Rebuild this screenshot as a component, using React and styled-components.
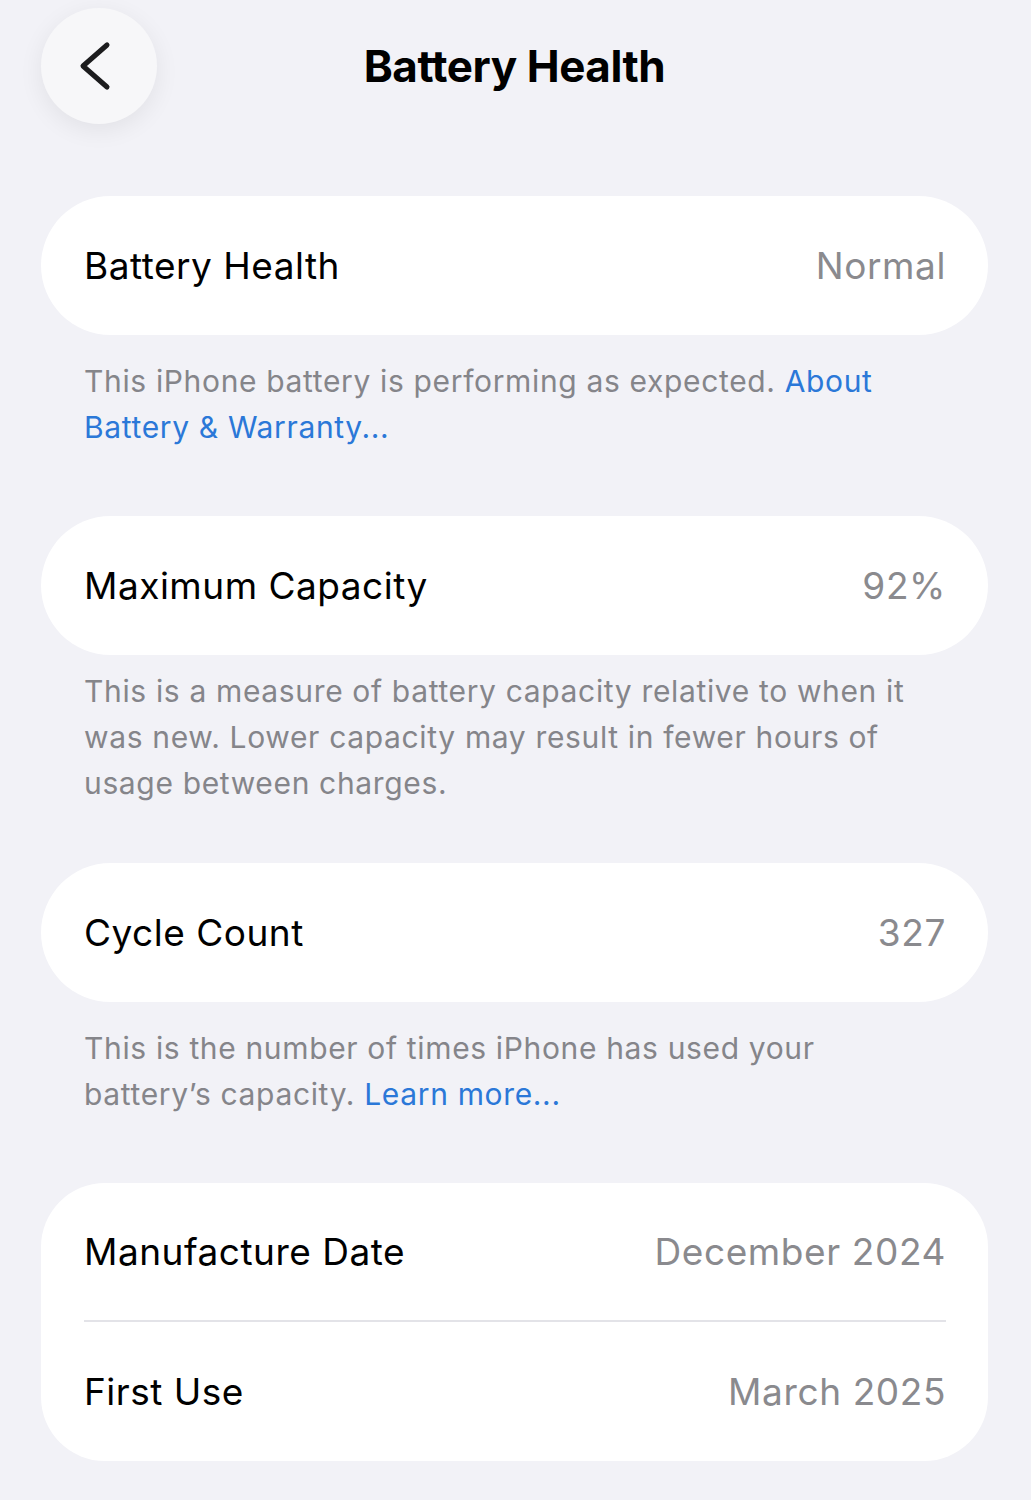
import React from 'react'
import styled, { createGlobalStyle } from 'styled-components'

const GlobalStyle = createGlobalStyle`
    body {
        margin: 0;
        background: #f2f2f7;
        font-family: Inter, "Noto Sans", sans-serif;
        -webkit-font-smoothing: antialiased;
    }
`

function BackIcon() {
    return (
        <svg width="116" height="116" viewBox="0 0 116 116">
            <path d="M66 37 L42 58 L66 79" fill="none" stroke="#1c1c1e" strokeWidth="5" strokeLinecap="round" strokeLinejoin="round" />
        </svg>
    )
}

function App() {
    return (
        <Page>
            <GlobalStyle />
            <Header>
                <BackButton><BackIcon /></BackButton>
                <Title>Battery Health</Title>
                <span />
            </Header>

            <Card>
                <Row>
                    <Label>Battery Health</Label>
                    <Value>Normal</Value>
                </Row>
            </Card>
            <Footer>
                This iPhone battery is performing as expected. <Link>About Battery &amp; Warranty...</Link>
            </Footer>

            <Card>
                <Row>
                    <Label>Maximum Capacity</Label>
                    <Value>92%</Value>
                </Row>
            </Card>
            <Footer compact>
                This is a measure of battery capacity relative to when it was new. Lower capacity may result in fewer hours of usage between charges.
            </Footer>

            <Card>
                <Row>
                    <Label>Cycle Count</Label>
                    <Value>327</Value>
                </Row>
            </Card>
            <Footer>
                This is the number of times iPhone has used your battery’s capacity. <Link>Learn more...</Link>
            </Footer>

            <Card grouped>
                <Row divided>
                    <Label>Manufacture Date</Label>
                    <Value>December 2024</Value>
                </Row>
                <Row>
                    <Label>First Use</Label>
                    <Value>March 2025</Value>
                </Row>
            </Card>
        </Page>
    )
}

export default App

const Page = styled.div`
    padding: 8px 43px 40px 41px;
    min-height: 1500px;
    box-sizing: border-box;
`
const Header = styled.div`
    display: grid;
    grid-template-columns: 116px 1fr 116px;
    align-items: center;
    height: 116px;
    margin-bottom: 72px;
`
const BackButton = styled.div`
    width: 116px;
    height: 116px;
    border-radius: 50%;
    background: #f7f7f9;
    box-shadow: 0 6px 24px rgba(0, 0, 0, 0.07);
    display: flex;
    align-items: center;
    justify-content: center;
`
const Title = styled.h1`
    margin: 0;
    text-align: center;
    font-size: 44px;
    font-weight: 700;
    color: #000;
    letter-spacing: -0.45px;
`
const Card = styled.div`
    background: #fff;
    border-radius: ${props => props.grouped ? '64px' : '70px'};
    padding: 0 42px 0 43px;
`
const Row = styled.div`
    height: 139px;
    display: flex;
    align-items: center;
    justify-content: space-between;
    box-sizing: border-box;
    border-bottom: ${props => props.divided ? '2px solid #e3e3e8' : 'none'};
`
const Label = styled.span`
    font-size: 37px;
    letter-spacing: 0.5px;
    color: #000;
`
const Value = styled.span`
    font-size: 37px;
    letter-spacing: 0.6px;
    color: #8a8a8e;
`
const Footer = styled.p`
    margin: 0;
    padding: ${props => props.compact ? '13px 80px 57px 43px' : '23px 80px 66px 43px'};
    font-size: 30px;
    line-height: 46px;
    letter-spacing: 0.65px;
    color: #85858a;
`
const Link = styled.span`
    color: #2b78d8;
`
